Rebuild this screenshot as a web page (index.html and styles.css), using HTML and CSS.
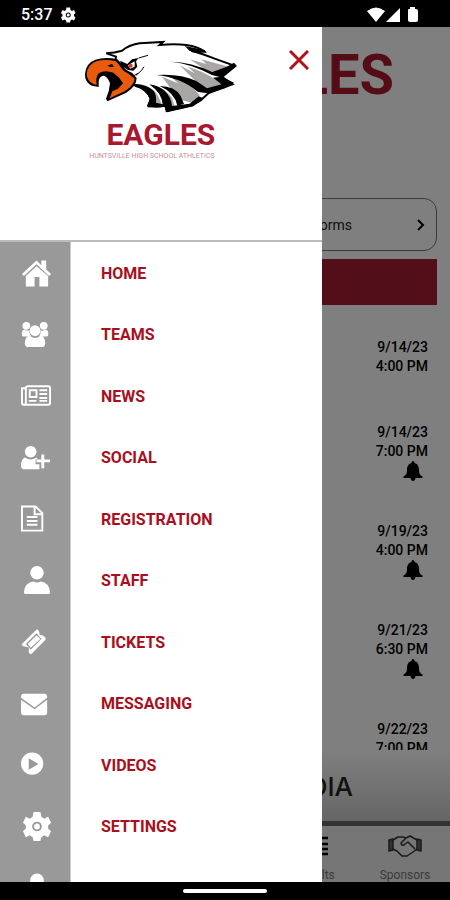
FILE: index.html
```
<!DOCTYPE html>
<html lang="en">
<head>
    <meta charset="UTF-8">
    <meta name="viewport" content="width=device-width, initial-scale=1.0">
    <title>Eagles Athletics</title>
    <link rel="stylesheet" href="styles.css">
</head>
<body>
    <header class="status-bar">
        <span class="time">5:37</span>
        <svg class="status-gear" viewBox="0 0 32 32"><use href="#gear"/></svg>
        <svg class="signal" viewBox="0 0 52 16">
            <path d="M0 4Q9 -3 18 4L9 15Z"/>
            <path d="M19 15L33 1V15Z"/>
            <path d="M41 3Q41 2 42 2H43V0H48V2H49Q51 2 51 4V13Q51 15 49 15H43Q41 15 41 13Z"/>
        </svg>
    </header>

    <div class="screen">
        <main class="page">
            <h1 class="page-title">EAGLES</h1>
            <button type="button" class="forms-button">
                <span>Forms</span>
                <svg viewBox="0 0 10 12"><path d="M2 1L7 6L2 11"/></svg>
            </button>
            <div class="banner"></div>
            <ul class="events">
                <li>9/14/23<br>4:00 PM</li>
                <li>9/14/23<br>7:00 PM
                    <svg class="bell" viewBox="0 0 20 20"><path id="bell" d="M10 0C11 0 11.5 1 11.5 2C15 3 16 6 16 9C16 13 17 14 19.500 15.5V17H0.500V15.500C3 14 4 13 4 9C4 6 5 3 8.500 2C8.500 1 9 0 10 0ZM7.500 17H12.500Q12 20 10 20Q8 20 7.500 17Z"/></svg>
                </li>
                <li>9/19/23<br>4:00 PM
                    <svg class="bell" viewBox="0 0 20 20"><use href="#bell"/></svg>
                </li>
                <li>9/21/23<br>6:30 PM
                    <svg class="bell" viewBox="0 0 20 20"><use href="#bell"/></svg>
                </li>
                <li>9/22/23<br>7:00 PM</li>
            </ul>
            <h2 class="media">MEDIA</h2>
            <nav class="tabs">
                <a href="#results">
                    <svg viewBox="0 0 34 24"><path d="M4 4H8M12 4H30M4 10H8M12 10H30M4 15H8M12 15H30M4 20H8M12 20H30" stroke="#000" stroke-width="2.500"/></svg>
                    Results
                </a>
                <a href="#sponsors">
                    <svg viewBox="0 0 34 24" fill="none" stroke="#333" stroke-width="1.500" stroke-linejoin="round">
                        <path d="M1 6L5 5V16L1 17ZM33 6L29 5V16L33 17Z" fill="#666"/>
                        <path d="M5 6L10 3H15L18 4L22 2L29 6M5 15L9 17L14 22H19L25 18L29 15"/>
                        <path d="M18 4L13 9Q14 13 17 10L20 8L27 15"/>
                    </svg>
                    Sponsors
                </a>
            </nav>
        </main>
        <div class="scrim"></div>

        <aside class="drawer">
            <div class="drawer-header">
                <button type="button" class="close" aria-label="Close menu">
                    <svg viewBox="0 0 20 20"><path d="M1 1L19 19M19 1L1 19"/></svg>
                </button>
                <svg class="eagle" viewBox="28 12 459 219">
                    <!-- head and wing -->
                    <path fill="#fff" stroke="#000" stroke-width="6" d="M122 74L124 62L95 52Q120 50 142 44Q165 26 195 22L265 18L255 27Q300 22 335 27Q370 32 388 46L350 45Q380 52 420 68L478 89L440 121L474 145L402 171L378 193L352 208L276 225L272 209L250 212L222 211L228 187Q218 156 180 147Z"/>
                    <!-- feathers -->
                    <g fill="#aaa6a5">
                        <path d="M345 70L395 84L380 70L462 92L425 112L390 100Z"/>
                        <path d="M315 88L360 112L340 92Q390 108 418 128L442 144L398 160L365 138Z"/>
                        <path d="M262 122L310 142L290 124Q330 128 358 158L375 178L352 200L310 190L290 160Z"/>
                        <path d="M238 150Q270 155 292 185L300 214L280 218Q276 190 238 150Z"/>
                        <path d="M205 150Q240 155 250 180L262 205L235 207L236 186Q228 165 205 150Z"/>
                    </g>
                    <path d="M478 80L487 90L444 125L412 117Q350 83 288 77Q350 78 413 108L455 93Z"/>
                    <path d="M478 140L450 157L400 172L370 168Q320 125 245 117Q315 112 365 135L397 157L440 145L415 125L440 122Z"/>
                    <path d="M384 186L356 211L276 229L270 207L240 212L216 211L226 190Q214 160 180 152L180 143Q220 145 238 166Q246 180 244 200L264 205Q262 172 224 145Q285 155 292 210L345 203L372 181Z"/>
                    <path d="M255 150Q300 150 318 180L328 204L308 209Q300 170 255 150Z"/>
                    <path d="M330 30L390 42L395 50L345 45Z"/>
                    <!-- beak -->
                    <path d="M31 115Q32 82 62 71Q92 62 128 70L142 84Q150 104 172 110L186 126Q186 150 155 170L98 196L94 188Q104 168 106 142Q100 122 86 119Q72 122 72 138V153L52 149Q30 140 31 115Z"/>
                    <path fill="#e85b0c" d="M36 115Q38 86 65 76Q92 68 124 76L136 90Q144 106 162 113L180 128Q178 148 150 166L105 187L113 166L130 158L145 142L134 126L116 110Q90 100 72 112Q62 122 66 147L56 144Q37 136 36 115Z"/>
                    <path d="M98 89L112 84L118 92L108 94Z"/>
                    <!-- eye -->
                    <path d="M136 74L158 84L172 70L192 66L184 76L188 92L176 104L160 102L142 90Z"/>
                    <path fill="#fff" d="M160 88L180 76L180 92L166 98Z"/>
                    <circle fill="#d7352a" cx="168" cy="89" r="6"/>
                    <path fill="none" stroke="#000" stroke-width="3" d="M192 66L220 58M184 118L200 104L208 92M176 120L190 112"/>
                </svg>
                <div class="team-name">EAGLES</div>
                <div class="school-name">HUNTSVILLE HIGH SCHOOL ATHLETICS</div>
            </div>

            <nav class="menu">
                <a href="#home">
                    <svg viewBox="0 0 32 32"><path d="M1 17L16 3L21 8V3H26V12L31 17L29 19L16 7L3 19Z"/><path d="M5 19L16 9L28 19V30H19V20H14V30H5Z"/></svg>
                    <span>HOME</span>
                </a>
                <a href="#teams">
                    <svg viewBox="0 0 32 32"><circle cx="5.500" cy="7" r="4"/><circle cx="23.500" cy="7" r="4"/><path d="M1 17Q0 11 4 11Q8 13 9 11Q8 16 11 18H3Q1 18 1 17ZM28 17Q29 11 25 11Q21 13 20 11Q21 16 18 18H26Q28 18 28 17Z"/><circle cx="14.500" cy="12" r="5.500"/><path d="M8 17Q14.500 22 21 17Q25 19 25 25Q25 29 21 29H8Q4 29 4 25Q4 19 8 17Z"/></svg>
                    <span>TEAMS</span>
                </a>
                <a href="#news">
                    <svg viewBox="0 0 32 32" class="line"><path d="M5 8Q5 6 7 6H28Q30 6 30 8V23Q30 25 28 25H3Q1 25 1 23V8H5V23Q5 25 3 25"/><path d="M9 10H16V17H9ZM8 21H16M19 10H27M19 14H27M19 18H27M19 21H27"/></svg>
                    <span>NEWS</span>
                </a>
                <a href="#social">
                    <svg viewBox="0 0 32 32"><circle cx="10" cy="10" r="6"/><path d="M4 16Q10 20 16 16L17 18H15V23H19V28H3Q0 28 0 24Q0 18 4 16Z"/><path d="M21 13H24V18H30V21H24V27H21V21H16V18H21Z"/></svg>
                    <span>SOCIAL</span>
                </a>
                <a href="#registration">
                    <svg viewBox="0 0 32 32" class="line"><path d="M1 3H15L22 10V28H1ZM14 3V11H22"/><path d="M6 14H17M6 18H17M6 22H17"/></svg>
                    <span>REGISTRATION</span>
                </a>
                <a href="#staff">
                    <svg viewBox="0 0 32 32"><g id="person"><circle cx="16.500" cy="8" r="7"/><path d="M3 28Q4 18 13 17Q16.500 19 20 17Q29 18 30 28Q30 30 28 30H5Q3 30 3 28Z"/></g></svg>
                    <span>STAFF</span>
                </a>
                <a href="#tickets">
                    <svg viewBox="0 0 32 32"><path fill-rule="evenodd" d="M1 18L15 4Q17 2 18 4L19 6Q18 9 22 9L25 11Q26 13 25 14L11 28Q10 29 8 27L8 25Q9 21 5 21L2 20Q0 19 1 18ZM5 18L10 24L21 13L16 7Z"/><path d="M7 18L16 9L20 13L10 22Z"/></svg>
                    <span>TICKETS</span>
                </a>
                <a href="#messaging">
                    <svg viewBox="0 0 32 32"><path d="M0 9Q0 6 3 6H24Q27 6 27 9V10L14 20L0 10ZM0 12L14 22L27 12V25Q27 28 24 28H3Q0 28 0 25Z"/></svg>
                    <span>MESSAGING</span>
                </a>
                <a href="#videos">
                    <svg viewBox="0 0 32 32"><path fill-rule="evenodd" d="M11.500 3A11.500 11.500 0 1 0 11.500 26A11.500 11.500 0 1 0 11.500 3ZM8 9L18 15L8 21Z"/></svg>
                    <span>VIDEOS</span>
                </a>
                <a href="#settings">
                    <svg viewBox="0 0 32 32"><path id="gear" fill-rule="evenodd" stroke-linejoin="round" d="M13 1H20L21 6L24 8L28 6L31 12L28 15V18L31 21L28 27L24 25L21 27L20 31H13L12 27L9 25L5 27L2 21L5 18V15L2 12L5 6L9 8L12 6ZM16.500 11A5 5 0 1 0 16.500 21A5 5 0 1 0 16.500 11ZM16.500 13A3 3 0 1 1 16.500 19A3 3 0 1 1 16.500 13Z"/></svg>
                    <span>SETTINGS</span>
                </a>
                <a href="#account" aria-label="Account">
                    <svg viewBox="0 0 32 32"><use href="#person"/></svg>
                </a>
            </nav>
        </aside>
    </div>

    <footer class="system-nav"><div class="pill"></div></footer>
</body>
</html>
```
FILE: styles.css
```
* {
    box-sizing: border-box;
}
body {
    margin: 0;
    height: 100vh;
    display: flex;
    flex-direction: column;
    overflow: hidden;
    background-color: #000;
    font-family: Roboto, "Liberation Sans", sans-serif;
}
h1, h2, ul {
    margin: 0;
    padding: 0;
}
a {
    text-decoration: none;
}
button {
    font-family: inherit;
    cursor: pointer;
}

/* status bar */
.status-bar {
    height: 27px;
    flex: none;
    display: flex;
    align-items: center;
    padding: 2px 31px 0 21px;
    color: white;
    fill: white;
}
.time {
    font-size: 16px;
    font-weight: 500;
}
.status-gear {
    width: 16px;
    height: 16px;
    margin-left: 7px;
}
.signal {
    width: 52px;
    height: 16px;
    margin-left: auto;
}

/* page behind the drawer */
.screen {
    flex: 1;
    min-height: 0;
    position: relative;
    overflow: hidden;
    background-color: white;
}
.page {
    height: 100%;
    display: flex;
    flex-direction: column;
}
.page-title {
    height: 171px;
    flex: none;
    padding: 10px 56px 0 0;
    text-align: right;
    font-size: 56px;
    line-height: 76px;
    color: #a8182f;
}
.forms-button {
    height: 53px;
    flex: none;
    margin: 0 13px 8px;
    padding: 0 10px 0 0;
    display: flex;
    align-items: center;
    justify-content: flex-end;
    gap: 64px;
    border: 1px solid #777;
    border-radius: 13px;
    background-color: white;
    font-size: 14px;
    color: #222;
}
.forms-button svg {
    width: 10px;
    height: 12px;
    fill: none;
    stroke: #000;
    stroke-width: 2;
}
.banner {
    height: 46px;
    flex: none;
    margin: 0 13px;
    background-color: #a41e32;
}
.events {
    flex: 1;
    min-height: 0;
    overflow: hidden;
    padding: 33px 22px 0;
    list-style: none;
    text-align: right;
    font-size: 14px;
    line-height: 19px;
    font-weight: 500;
    color: #000;
}
.events li {
    padding-bottom: 47px;
}
.bell {
    display: block;
    width: 20px;
    height: 20px;
    margin: 0 5px -6px auto;
}
.media {
    height: 71px;
    flex: none;
    padding-right: 97px;
    text-align: right;
    font-family: Inter, Roboto, sans-serif;
    font-size: 26px;
    line-height: 74px;
    font-weight: 500;
    color: #222;
    background: linear-gradient(#fff, #ccc);
}
.tabs {
    height: 61px;
    flex: none;
    display: flex;
    justify-content: flex-end;
    border-top: 5px solid #666;
    background-color: #ececec;
}
.tabs a {
    width: 20%;
    padding-top: 8px;
    display: flex;
    flex-direction: column;
    align-items: center;
    gap: 10px;
    font-size: 12px;
    color: #777;
}
.tabs svg {
    width: 34px;
    height: 24px;
}
.scrim {
    position: absolute;
    inset: 0;
    background-color: rgba(0, 0, 0, 0.5);
}

/* drawer */
.drawer {
    position: absolute;
    top: 0;
    bottom: 0;
    left: 0;
    width: 71.5%;
    overflow: hidden;
    background-color: white;
}
.drawer-header {
    height: 215px;
    padding-top: 13px;
    display: flex;
    flex-direction: column;
    align-items: center;
    border-bottom: 2px solid #bbb;
}
.close {
    position: absolute;
    top: 17px;
    right: 7px;
    padding: 6px;
    border: none;
    background: none;
}
.close svg {
    display: block;
    width: 20px;
    height: 20px;
    fill: none;
    stroke: #b3111d;
    stroke-width: 3;
}
.eagle {
    width: 153px;
    height: 73px;
}
.team-name {
    margin-top: 4px;
    font-size: 30px;
    line-height: 35px;
    font-weight: bold;
    color: #a8182f;
}
.school-name {
    padding-right: 18px;
    font-size: 7px;
    line-height: 8px;
    color: #c98d98;
}
.menu a {
    height: 62px;
    display: flex;
    align-items: center;
    gap: 30px;
    font-size: 16px;
    font-weight: bold;
    color: #a90f1c;
}
.menu a:nth-child(even) {
    height: 61px;
}
.menu svg {
    width: 71px;
    height: 100%;
    padding: 0 18px 0 21px;
    border-right: 1px solid #ccc;
    background-color: #999;
    fill: white;
}
.menu .line {
    fill: none;
    stroke: white;
    stroke-width: 2;
}

/* system navigation */
.system-nav {
    height: 18px;
    flex: none;
    display: flex;
    align-items: center;
    justify-content: center;
}
.pill {
    width: 84px;
    height: 4px;
    border-radius: 2px;
    background-color: white;
}
```
